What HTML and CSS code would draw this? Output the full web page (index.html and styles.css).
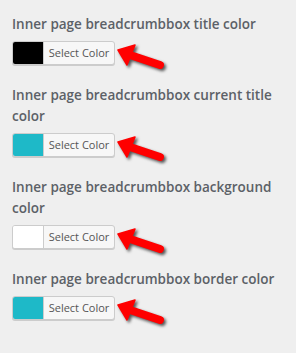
FILE: index.html
```html
<!DOCTYPE html>
<html lang="en">
  <head>
    <meta charset="UTF-8" />
    <meta name="viewport" content="width=device-width, initial-scale=1.0" />
    <title>Breadcrumb Colors</title>
    <link rel="stylesheet" href="styles.css">
  </head>

  <body>
    <div class="settings">
      <div class="option">
        <h4>Inner page breadcrumbbox title color</h4>
        <div class="picker-row">
          <button class="picker" type="button">
            <span class="swatch swatch-black"></span>
            <span class="picker-label">Select Color</span>
          </button>
          <svg class="arrow" width="52" height="32" viewBox="0 0 52 32">
            <path d="M2 7 L19 2 L11 22 Z" />
            <line x1="14" y1="12" x2="44" y2="22" />
          </svg>
        </div>
      </div>

      <div class="option">
        <h4>Inner page breadcrumbbox current title color</h4>
        <div class="picker-row">
          <button class="picker" type="button">
            <span class="swatch swatch-teal"></span>
            <span class="picker-label">Select Color</span>
          </button>
          <svg class="arrow" width="52" height="32" viewBox="0 0 52 32">
            <path d="M2 7 L19 2 L11 22 Z" />
            <line x1="14" y1="12" x2="44" y2="22" />
          </svg>
        </div>
      </div>

      <div class="option">
        <h4>Inner page breadcrumbbox background color</h4>
        <div class="picker-row">
          <button class="picker" type="button">
            <span class="swatch swatch-white"></span>
            <span class="picker-label">Select Color</span>
          </button>
          <svg class="arrow" width="52" height="32" viewBox="0 0 52 32">
            <path d="M2 7 L19 2 L11 22 Z" />
            <line x1="14" y1="12" x2="44" y2="22" />
          </svg>
        </div>
      </div>

      <div class="option">
        <h4>Inner page breadcrumbbox border color</h4>
        <div class="picker-row">
          <button class="picker" type="button">
            <span class="swatch swatch-teal"></span>
            <span class="picker-label">Select Color</span>
          </button>
          <svg class="arrow" width="52" height="32" viewBox="0 0 52 32">
            <path d="M2 7 L19 2 L11 22 Z" />
            <line x1="14" y1="12" x2="44" y2="22" />
          </svg>
        </div>
      </div>
    </div>
  </body>
</html>
```

FILE: styles.css
```css
body {
  margin: 0;
  padding: 0;
  font-family: "Open Sans", Arial, sans-serif;
  background-color: #efefef;
}

.settings {
  padding: 14px 12px 0 12px;
}

.option {
  margin-bottom: 20px;
}

.option h4 {
  margin: 0 0 6px 0;
  font-size: 13.5px;
  line-height: 21px;
  font-weight: 600;
  color: #5c6167;
}

.picker-row {
  display: flex;
  align-items: flex-start;
  height: 24px;
}

.picker {
  display: flex;
  align-items: stretch;
  height: 24px;
  width: 103px;
  padding: 0;
  border: 1px solid #cccccc;
  border-radius: 3px;
  background-color: #f7f7f7;
  box-shadow: 0 1px 0 #cccccc;
  cursor: pointer;
  overflow: hidden;
}

.swatch {
  width: 30px;
  border-right: 1px solid #cccccc;
}

.swatch-black {
  background-color: #000000;
}

.swatch-teal {
  background-color: #1eb9c8;
}

.swatch-white {
  background-color: #ffffff;
}

.picker-label {
  flex: 1;
  font-family: "Open Sans", Arial, sans-serif;
  font-size: 11px;
  line-height: 22px;
  color: #555555;
  text-align: center;
}

.arrow {
  flex-shrink: 0;
  margin-top: 2px;
  margin-left: 1px;
  overflow: visible;
  filter: drop-shadow(2px 2px 1.5px rgba(0, 0, 0, 0.65));
}

.arrow path {
  fill: #ff0000;
  stroke: #ff0000;
  stroke-width: 1.5;
  stroke-linejoin: round;
}

.arrow line {
  stroke: #ff0000;
  stroke-width: 8;
  stroke-linecap: round;
}
```
